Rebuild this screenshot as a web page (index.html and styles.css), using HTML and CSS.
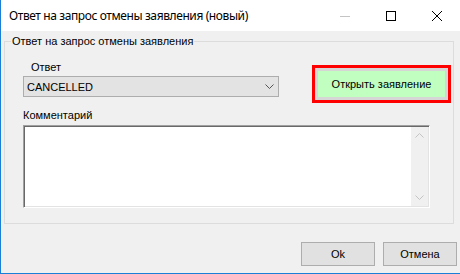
FILE: index.html
```html
<!DOCTYPE html>
<html lang="ru">

<head>
    <meta charset="UTF-8">
    <title>Ответ на запрос отмены заявления (новый)</title>
    <link rel="stylesheet" href="styles.css">
</head>

<body>
    <div class="window">
        <!-- Заголовок окна -->
        <div class="titlebar">
            <span class="title">Ответ на запрос отмены заявления (новый)</span>
            <div class="caption">
                <span class="cap-btn">
                    <svg width="10" height="10" viewBox="0 0 10 10"><path d="M0 5.5H10" stroke="#c4c4c4" fill="none"/></svg>
                </span>
                <span class="cap-btn">
                    <svg width="10" height="10" viewBox="0 0 10 10"><rect x="0.5" y="0.5" width="9" height="9" stroke="#000" fill="none"/></svg>
                </span>
                <span class="cap-btn">
                    <svg width="10" height="10" viewBox="0 0 10 10"><path d="M0 0L10 10M10 0L0 10" stroke="#000" fill="none"/></svg>
                </span>
            </div>
        </div>

        <div class="content">
            <fieldset class="group">
                <legend>Ответ на запрос отмены заявления</legend>
                <div class="group-body">
                    <div class="top-row">
                        <div class="answer">
                            <div class="label answer-label">Ответ</div>
                            <div class="combo">
                                <span>CANCELLED</span>
                                <svg width="9" height="5" viewBox="0 0 9 5"><path d="M0.5 0.5L4.5 4.5L8.5 0.5" stroke="#555" fill="none"/></svg>
                            </div>
                        </div>
                        <!-- Кнопка, выделенная красной рамкой -->
                        <div class="highlight">
                            <button class="open-btn">Открыть заявление</button>
                        </div>
                    </div>

                    <div class="label comment-label">Комментарий</div>
                    <div class="comment-box">
                        <textarea class="comment"></textarea>
                        <div class="scrollbar">
                            <span class="arrow">
                                <svg width="9" height="5" viewBox="0 0 9 5"><path d="M0.5 4.5L4.5 0.5L8.5 4.5" stroke="#c4c4c4" fill="none"/></svg>
                            </span>
                            <span class="arrow">
                                <svg width="9" height="5" viewBox="0 0 9 5"><path d="M0.5 0.5L4.5 4.5L8.5 0.5" stroke="#c4c4c4" fill="none"/></svg>
                            </span>
                        </div>
                    </div>
                </div>
            </fieldset>

            <div class="footer">
                <button class="btn">Ok</button>
                <button class="btn">Отмена</button>
            </div>
        </div>
    </div>
</body>

</html>
```

FILE: styles.css
```css
/* Сброс */
* {
    margin: 0;
    padding: 0;
    box-sizing: border-box;
}

body {
    font-family: 'Liberation Sans', Arial, sans-serif;
    font-size: 11px;
    color: #000;
    background: #f0f0f0;
}

/* Окно */
.window {
    width: 460px;
    height: 274px;
    background: #f0f0f0;
    border-left: 1px solid #1a7fd6;
    border-bottom: 1px solid #1a7fd6;
}

/* Заголовок */
.titlebar {
    height: 31px;
    background: #fff;
    display: flex;
    align-items: center;
    justify-content: space-between;
}

.title {
    font-family: 'Noto Sans', sans-serif;
    font-size: 12px;
    letter-spacing: -0.4px;
    padding-left: 8px;
}

.caption {
    display: flex;
    height: 100%;
}

.cap-btn {
    width: 46px;
    height: 100%;
    display: flex;
    align-items: center;
    justify-content: center;
}

.cap-btn svg {
    display: block;
}

/* Группа */
.group {
    width: 450px;
    margin: 4px 0 0 3px;
    padding: 0 0 15px 6px;
    border: 1px solid #dcdcdc;
    min-width: 0;
}

.group legend {
    padding: 0 1px;
    line-height: 13px;
}

.group-body {
    padding: 13px 0 0 12px;
}

.label {
    line-height: 13px;
}

.top-row {
    display: flex;
    align-items: flex-start;
}

.answer {
    width: 256px;
}

.answer-label {
    padding-left: 8px;
}

.combo {
    margin-top: 2px;
    height: 21px;
    border: 1px solid #adadad;
    background: #e3e3e3;
    display: flex;
    align-items: center;
    justify-content: space-between;
    padding: 0 4px 0 3px;
}

.combo svg {
    display: block;
}

/* Красная рамка вокруг кнопки */
.highlight {
    margin: 4px 0 0 33px;
    width: 139px;
    height: 38px;
    border: 3px solid #ff0000;
}

.open-btn {
    width: 100%;
    height: 100%;
    border: 3px solid #d6d6d6;
    background: #c0ffc0;
    font-family: inherit;
    font-size: 11px;
    color: #000;
}

.comment-label {
    margin-top: 6px;
}

/* Поле комментария */
.comment-box {
    margin-top: 3px;
    width: 407px;
    height: 83px;
    display: flex;
    border: 1px solid;
    border-color: #a0a0a0 #fff #fff #a0a0a0;
    box-shadow: inset 1px 1px #696969, inset -1px -1px #e3e3e3;
    background: #fff;
    padding: 1px;
}

.comment {
    flex: 1;
    border: none;
    outline: none;
    resize: none;
    background: #fff;
}

.scrollbar {
    width: 17px;
    background: #f0f0f0;
    display: flex;
    flex-direction: column;
    justify-content: space-between;
}

.arrow {
    height: 17px;
    display: flex;
    align-items: center;
    justify-content: center;
}

.arrow svg {
    display: block;
}

/* Нижние кнопки */
.footer {
    margin-top: 18px;
    display: flex;
    justify-content: flex-end;
    gap: 8px;
    padding-right: 3px;
}

.btn {
    width: 74px;
    height: 24px;
    border: 1px solid #adadad;
    background: #e1e1e1;
    font-family: inherit;
    font-size: 11px;
    color: #000;
}
```
